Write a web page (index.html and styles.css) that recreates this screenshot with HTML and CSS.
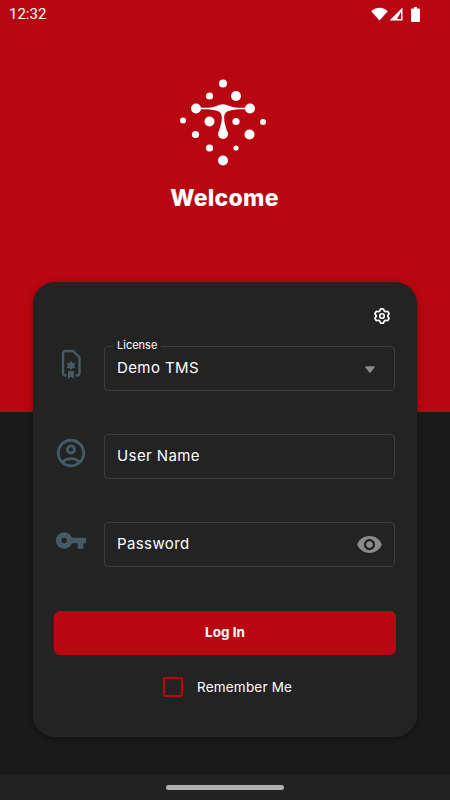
FILE: index.html
```html
<!DOCTYPE html>
<html lang="en">
  <head>
    <meta charset="UTF-8" />
    <meta name="viewport" content="width=device-width, initial-scale=1.0" />
    <title>Welcome</title>
    <link rel="stylesheet" href="styles.css">
  </head>
  <body>
    <div class="status-bar">
      <span class="status-time">12:32</span>
      <div class="status-icons">
        <svg width="17" height="14" viewBox="0 0 17 14"><path d="M8.500 13.500 0.200 4.200C2.400 2 5.300 0.800 8.500 0.800s6.100 1.200 8.300 3.400z" fill="#fff"/></svg>
        <svg class="cell-icon" width="14" height="14" viewBox="0 0 14 14"><path fill-rule="evenodd" d="M0.500 13.500 13.500 0.500v13zM8 12h4V5z" fill="#fff"/></svg>
        <svg width="9" height="15" viewBox="0 0 9 15"><path d="M3 0h3v1.500h2a1 1 0 0 1 1 1V14a1 1 0 0 1-1 1H1a1 1 0 0 1-1-1V2.500a1 1 0 0 1 1-1h2z" fill="#fff"/></svg>
      </div>
    </div>

    <div class="hero">
      <svg class="logo" width="94" height="90" viewBox="176 76 94 90" fill="#fff">
        <circle cx="223" cy="83.500" r="4"/>
        <circle cx="209.500" cy="96" r="3.600"/>
        <circle cx="236" cy="96" r="5"/>
        <circle cx="196" cy="108.500" r="5"/>
        <circle cx="250" cy="108.500" r="5"/>
        <path d="M196 107.500C205 108 212 108 216.500 106Q223 102.500 229.500 106C234 108 241 108 250 107.500V109.500C241 109 235 109.500 230 110.500C225.500 111.500 224.200 114 224.200 118C224.200 122 225 125 228 134H218C221 125 221.800 122 221.800 118C221.800 114 220.500 111.500 216 110.500C211 109.500 205 109 196 109.500Z"/>
        <circle cx="223" cy="134" r="5"/>
        <circle cx="183" cy="120.500" r="3"/>
        <circle cx="209.500" cy="121.500" r="5"/>
        <circle cx="236" cy="121.500" r="3.600"/>
        <circle cx="263" cy="122" r="3"/>
        <circle cx="195.500" cy="134.500" r="3.600"/>
        <circle cx="249.500" cy="134.500" r="5"/>
        <circle cx="209.500" cy="148" r="3.600"/>
        <circle cx="236" cy="148" r="2.600"/>
        <circle cx="223" cy="160.500" r="5"/>
      </svg>
      <h1>Welcome</h1>
    </div>

    <form class="login-card">
      <div class="card-top">
        <svg width="18" height="18" viewBox="0 0 24 24" fill="none" stroke="#fff" stroke-width="2.200" stroke-linejoin="round"><path d="M12 2.500l2 .1 1 2.700 1.700 1 2.800-.6 2 3.300-1.800 2.200v1.600l1.800 2.200-2 3.300-2.800-.6-1.700 1-1 2.700h-4l-1-2.700-1.700-1-2.800.6-2-3.300 1.800-2.200v-1.600L2.500 9l2-3.300 2.800.6 1.700-1 1-2.700z"/><circle cx="12" cy="12" r="3"/></svg>
      </div>

      <div class="form-row">
        <svg class="row-icon" width="22" height="32" viewBox="0 0 22 32" fill="none"><path d="M6.500 27.500H5.500A2.500 2.500 0 0 1 3 25V5.500A2.500 2.500 0 0 1 5.500 3H13.300L19.500 9.500V25A2.500 2.500 0 0 1 17 27.500H15.500" stroke="#455a64" stroke-width="2.400" stroke-linejoin="round"/><path d="M11 12.800l1.500 2.300 2.900-.3-1.200 2.700 1.200 2.700-2.900-.3L11 22.200l-1.500-2.300-2.900.3 1.200-2.700-1.200-2.700 2.900.3z" fill="#455a64"/><path d="M8 23h6V31L11 28.800 8 31z" fill="#455a64"/></svg>
        <div class="field">
          <span class="field-label">License</span>
          <span class="field-text">Demo TMS</span>
          <svg class="field-arrow" width="10" height="7" viewBox="0 0 10 7"><path d="M1 1h8L5 6z" fill="#8a8a8a" stroke="#8a8a8a" stroke-width="1.500" stroke-linejoin="round"/></svg>
        </div>
      </div>

      <div class="form-row">
        <svg class="row-icon" width="34" height="34" viewBox="0 0 24 24" fill="#455a64"><path d="M12 2C6.480 2 2 6.480 2 12s4.480 10 10 10 10-4.480 10-10S17.520 2 12 2zM7.350 18.500C8.660 17.560 10.260 17 12 17s3.340.56 4.650 1.500C15.340 19.440 13.740 20 12 20s-3.340-.56-4.650-1.500zm10.790-1.380C16.450 15.800 14.320 15 12 15s-4.450.8-6.140 2.120C4.700 15.730 4 13.950 4 12c0-4.420 3.580-8 8-8s8 3.580 8 8c0 1.950-.7 3.730-1.860 5.120zM12 6c-1.930 0-3.500 1.570-3.500 3.500S10.070 13 12 13s3.500-1.570 3.500-3.500S13.930 6 12 6zm0 5c-.83 0-1.500-.67-1.500-1.500S11.170 8 12 8s1.500.67 1.500 1.500S12.830 11 12 11z"/></svg>
        <div class="field">
          <span class="field-text">User Name</span>
        </div>
      </div>

      <div class="form-row">
        <svg class="row-icon" width="33" height="33" viewBox="0 0 24 24" fill="#455a64"><path d="M7 14c-1.100 0-2-.9-2-2s.9-2 2-2 2 .9 2 2-.9 2-2 2zm5.650-4C11.830 7.670 9.610 6 7 6c-3.310 0-6 2.690-6 6s2.690 6 6 6c2.610 0 4.830-1.670 5.650-4H17v4h4v-4h2v-4H12.650z"/></svg>
        <div class="field">
          <span class="field-text">Password</span>
          <svg class="field-eye" width="27" height="27" viewBox="0 0 24 24" fill="#8a8a8a"><path d="M12 4.500C7 4.500 2.730 7.610 1 12c1.730 4.390 6 7.500 11 7.500s9.270-3.110 11-7.500c-1.730-4.390-6-7.500-11-7.500zM12 17c-2.760 0-5-2.240-5-5s2.240-5 5-5 5 2.240 5 5-2.240 5-5 5zm0-8c-1.660 0-3 1.340-3 3s1.340 3 3 3 3-1.340 3-3-1.340-3-3-3z"/></svg>
        </div>
      </div>

      <button type="button" class="login-btn"><span>Log In</span></button>

      <div class="remember">
        <span class="remember-box"></span>
        <span class="remember-text">Remember Me</span>
      </div>
    </form>

    <div class="nav-bar">
      <span class="nav-pill"></span>
    </div>
  </body>
</html>
```

FILE: styles.css
```css
* {
  margin: 0;
  padding: 0;
  box-sizing: border-box;
}

body {
  font-family: "Inter", "Open Sans", sans-serif;
  height: 800px;
  overflow: hidden;
  color: #fff;
  background: linear-gradient(#b80711 412px, #1a1a1a 412px);
  display: flex;
  flex-direction: column;
}

.status-bar {
  height: 28px;
  padding: 0 30px 0 9px;
  display: flex;
  align-items: center;
  justify-content: space-between;
}

.status-time {
  font-family: "Roboto", sans-serif;
  font-size: 15px;
}

.status-icons {
  display: flex;
  align-items: center;
  gap: 1px;
}

.cell-icon {
  margin-right: 7px;
}

.hero {
  height: 254px;
  padding-top: 48px;
  display: flex;
  flex-direction: column;
  align-items: center;
}

.logo {
  margin-right: 4px;
}

.hero h1 {
  font-size: 23px;
  font-weight: 800;
  letter-spacing: 0.3px;
  line-height: 28px;
  margin-top: 18px;
  margin-right: 1px;
}

.login-card {
  width: 384px;
  height: 455px;
  margin-left: 33px;
  padding: 25px 21px 0;
  background-color: #232323;
  border-radius: 22px;
  box-shadow: 0 2px 6px rgba(0, 0, 0, 0.35);
}

.card-top {
  height: 39px;
  padding-right: 5px;
  display: flex;
  justify-content: flex-end;
}

.form-row {
  display: flex;
  align-items: flex-start;
  margin-bottom: 43px;
}

.row-icon {
  flex: none;
  width: 34px;
  margin-top: 2px;
  margin-right: 16px;
}

.field {
  position: relative;
  width: 291px;
  height: 45px;
  padding: 0 12px;
  border: 1.500px solid #3d3d3d;
  border-radius: 4px;
  display: flex;
  align-items: center;
  justify-content: space-between;
}

.field-label {
  position: absolute;
  top: -9px;
  left: 8px;
  padding: 0 4px;
  font-size: 11px;
  line-height: 14px;
  background-color: #232323;
}

.field-text {
  font-size: 15px;
  letter-spacing: 0.4px;
  padding-bottom: 2px;
}

.field-arrow {
  margin: 2px 7.500px 0 0;
}

.field-eye {
  margin-right: -1px;
}

.login-btn {
  display: block;
  width: 342px;
  height: 44px;
  margin-top: 44px;
  padding-bottom: 2px;
  font-family: inherit;
  font-size: 13.500px;
  font-weight: 700;
  color: #fff;
  background-color: #b80711;
  border: none;
  border-radius: 6px;
}

.remember {
  margin-top: 22px;
  padding-left: 109px;
  display: flex;
  align-items: center;
  gap: 14px;
}

.remember-box {
  width: 20px;
  height: 20px;
  border: 2px solid #b80711;
  border-radius: 2px;
}

.remember-text {
  font-size: 13.500px;
  letter-spacing: 0.2px;
}

.nav-bar {
  margin-top: auto;
  height: 26px;
  background-color: #222;
  display: flex;
  justify-content: center;
  padding-top: 11px;
}

.nav-pill {
  width: 118px;
  height: 5px;
  background-color: #b0b0b0;
  border-radius: 3px;
}
```
